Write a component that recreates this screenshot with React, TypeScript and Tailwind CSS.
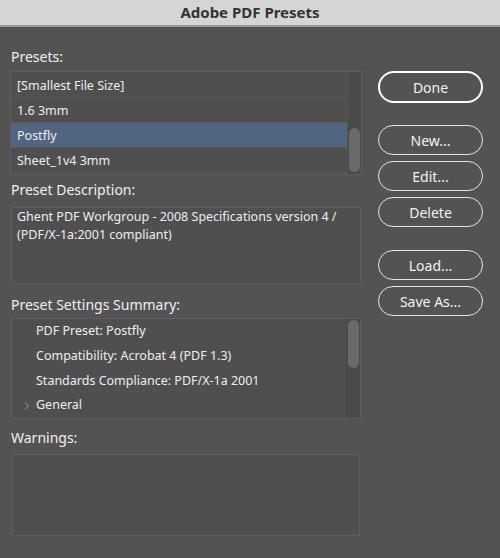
import { ChevronRight } from 'lucide-react';

const presets = ['[Smallest File Size]', '1.6 3mm', 'Postfly', 'Sheet_1v4 3mm'];

const summary = [
  'PDF Preset: Postfly',
  'Compatibility: Acrobat 4 (PDF 1.3)',
  'Standards Compliance: PDF/X-1a 2001',
];

function Label({ children }: { children: React.ReactNode }) {
  return <div className="text-[14px] leading-[18px] text-[#f0f0f0] px-[11px]">{children}</div>;
}

function PillButton({ children, primary }: { children: React.ReactNode; primary?: boolean }) {
  return (
    <button
      className={`w-[105px] rounded-full text-[14px] text-[#f2f2f2] ${
        primary ? 'h-[32px] border-2 border-white' : 'h-[30px] border border-[#e6e6e6]'
      }`}
    >
      {children}
    </button>
  );
}

export default function App() {
  return (
    <div className="w-[500px] h-[558px] bg-[#535353] flex flex-col" style={{ fontFamily: '"Noto Sans", "Open Sans", sans-serif' }}>
      {/* Title bar */}
      <div className="h-[27px] shrink-0 bg-[#d5d5d5] border-b-2 border-[#9b9b9b] flex items-center justify-center">
        <span className="text-[15px] font-bold text-[#333]">Adobe PDF Presets</span>
      </div>

      <div className="flex flex-1">
        {/* Left column */}
        <div className="w-[372px] flex flex-col pt-[21px]">
          <Label>Presets:</Label>
          <div className="mx-[10px] mt-[5px] h-[104px] border border-[#5e5e5e] bg-[#4f4f4f] flex">
            <div className="flex-1 flex flex-col pt-[1px]">
              {presets.map((p) => (
                <div
                  key={p}
                  className={`h-[25px] px-[6px] pt-[2px] flex items-center text-[12.5px] text-[#eeeeee] border-b border-[#595959] ${
                    p === 'Postfly' ? 'bg-[#526580]' : ''
                  }`}
                >
                  {p}
                </div>
              ))}
            </div>
            <div className="w-[14px] bg-[#4a4a4a] border-l border-[#555] flex flex-col justify-end pb-[2px] items-center">
              <div className="w-[11px] h-[44px] rounded-full bg-[#6a6a6a]" />
            </div>
          </div>

          <div className="mt-[6px]">
            <Label>Preset Description:</Label>
          </div>
          <div className="mx-[11px] mt-[8px] h-[77px] border border-[#5e5e5e] bg-[#4f4f4f] px-[5px] text-[12.5px] leading-[18px] text-[#eeeeee]">
            Ghent PDF Workgroup - 2008 Specifications version 4 /
            <br />
            (PDF/X-1a:2001 compliant)
          </div>

          <div className="mt-[12px]">
            <Label>Preset Settings Summary:</Label>
          </div>
          <div className="mx-[11px] mt-[4px] h-[101px] border border-[#5e5e5e] bg-[#4f4f4f] flex">
            <div className="flex-1 flex flex-col">
              {summary.map((s) => (
                <div key={s} className="h-[25.5px] pl-[24px] flex items-center text-[12.5px] text-[#eeeeee]">
                  {s}
                </div>
              ))}
              <div className="h-[25.5px] pl-[9px] flex items-center text-[12.5px] text-[#eeeeee]">
                <ChevronRight className="w-[12px] h-[12px] text-[#bbbbbb] mr-[3px]" strokeWidth={1.5} />
                General
              </div>
            </div>
            <div className="w-[14px] bg-[#4a4a4a] flex flex-col items-center pt-[1px]">
              <div className="w-[11px] h-[48px] rounded-full bg-[#6a6a6a]" />
            </div>
          </div>

          <div className="mt-[10px]">
            <Label>Warnings:</Label>
          </div>
          <div className="mx-[12px] mt-[7px] h-[82px] border border-[#5e5e5e] bg-[#4f4f4f]" />
        </div>

        {/* Right column */}
        <div className="flex flex-col pt-[44px] pl-[6px]">
          <PillButton primary>Done</PillButton>
          <div className="mt-[22px] flex flex-col gap-[6px]">
            <PillButton>New...</PillButton>
            <PillButton>Edit...</PillButton>
            <PillButton>Delete</PillButton>
          </div>
          <div className="mt-[23px] flex flex-col gap-[6px]">
            <PillButton>Load...</PillButton>
            <PillButton>Save As...</PillButton>
          </div>
        </div>
      </div>
    </div>
  );
}
